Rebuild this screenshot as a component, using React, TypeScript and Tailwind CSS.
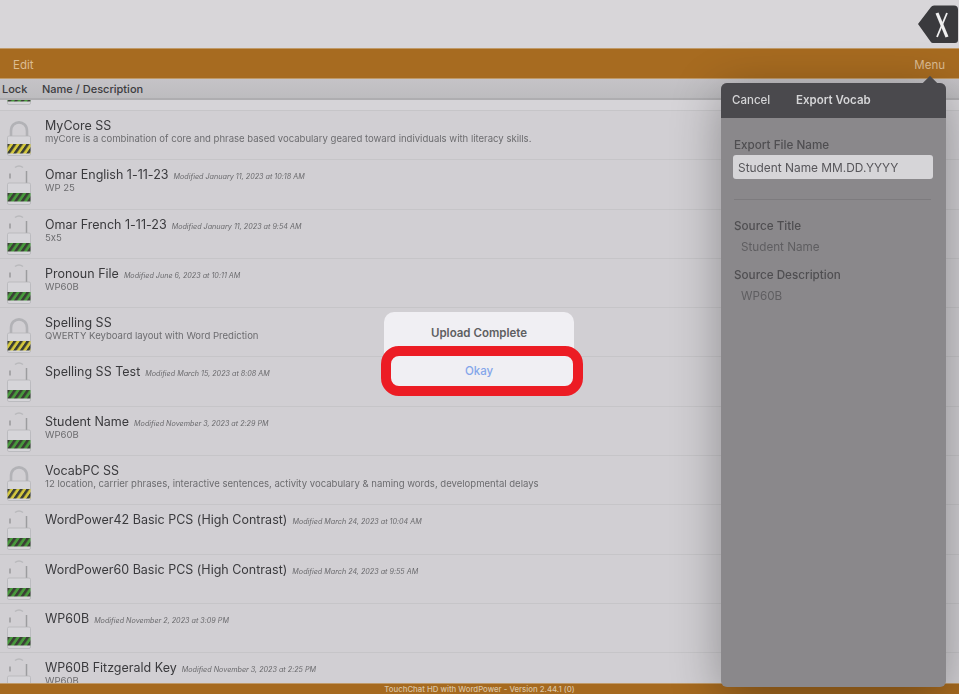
const font = "font-['Inter','Liberation_Sans',sans-serif] [font-feature-settings:'calt'_0]";

function Lock({ color }: { color: "y" | "g" }) {
  const open = color === "g";
  const stripe = open ? "#37932a" : "#d4c62c";
  const id = open ? "sg" : "sy";
  return (
    <svg width="24" height="40" viewBox="0 0 24 40" className="shrink-0">
      <defs>
        <pattern id={id} width="6.500" height="10" patternUnits="userSpaceOnUse" patternTransform="skewX(-35)">
          <rect width="6.500" height="10" fill={stripe} />
          <rect width="3.200" height="10" fill="#2a2e24" />
        </pattern>
      </defs>
      {open ? (
        <g fill="none" strokeWidth="1.500">
          <path d="M8 2.500 Q12 -0.500 16 2.500" stroke="#b9b9bc" />
          <path d="M3 8.500v5" stroke="#97979a" />
          <path d="M19.500 6v12" stroke="#9c9c9f" />
          <path d="M2.700 18.500v8" stroke="#b0b0b3" />
        </g>
      ) : (
        <path d="M4 20V15C4 3.500 20 3.500 20 15V20" fill="none" stroke="#b2b2b6" strokeWidth="2.600" />
      )}
      <rect x="0.500" y={open ? 18 : 20} width="23" height={open ? 21.500 : 19.500} rx="1.500" fill="#d6d5d9" stroke="#b2b2b5" strokeWidth="0.700" />
      <rect x="0.500" y="28" width="23" height={open ? 8.500 : 9.500} fill={`url(#${id})`} opacity="0.9" />
    </svg>
  );
}

type Row = { name: string; mod?: string; desc?: string; lock: "y" | "g" };

const rows: Row[] = [
  { name: "MyCore SS", desc: "myCore is a combination of core and phrase based vocabulary geared toward individuals with literacy skills.", lock: "y" },
  { name: "Omar English 1-11-23", mod: "Modified January 11, 2023 at 10:18 AM", desc: "WP 25", lock: "g" },
  { name: "Omar French 1-11-23", mod: "Modified January 11, 2023 at 9:54 AM", desc: "5x5", lock: "g" },
  { name: "Pronoun File", mod: "Modified June 6, 2023 at 10:11 AM", desc: "WP60B", lock: "g" },
  { name: "Spelling SS", desc: "QWERTY Keyboard layout with Word Prediction", lock: "y" },
  { name: "Spelling SS Test", mod: "Modified March 15, 2023 at 8:08 AM", lock: "g" },
  { name: "Student Name", mod: "Modified November 3, 2023 at 2:29 PM", desc: "WP60B", lock: "g" },
  { name: "VocabPC SS", desc: "12 location, carrier phrases, interactive sentences, activity vocabulary & naming words, developmental delays", lock: "y" },
  { name: "WordPower42 Basic PCS (High Contrast)", mod: "Modified March 24, 2023 at 10:04 AM", lock: "g" },
  { name: "WordPower60 Basic PCS (High Contrast)", mod: "Modified March 24, 2023 at 9:55 AM", lock: "g" },
  { name: "WP60B", mod: "Modified November 2, 2023 at 3:09 PM", lock: "g" },
  { name: "WP60B Fitzgerald Key", mod: "Modified November 3, 2023 at 2:25 PM", desc: "WP60B", lock: "g" },
];

export default function App() {
  return (
    <div className={`${font} relative h-[694px] w-[961px] overflow-hidden bg-[#d1cfd3]`}>
      <div className="relative h-full w-full overflow-hidden blur-[0.4px]">
        <div className="flex h-full w-[959px] flex-col">
          <div className="relative h-[48px] shrink-0 bg-[#d8d6d9]">
            <svg width="42" height="40" viewBox="0 0 42 40" className="absolute right-0 top-[4px]">
              <path d="M1 20 L14 3 Q15 1.500 17 1.500 H37 Q41 1.500 41 5.500 V36 Q41 39 38 39 H16 Q14.500 39 13.500 37.500 Z" fill="#3a3a3d" />
              <path d="M20 9 L30 33" stroke="#f0f0f0" strokeWidth="3.200" fill="none" />
              <path d="M30 9 L20 33" stroke="#f0f0f0" strokeWidth="1.800" fill="none" />
            </svg>
          </div>
          <div className="flex h-[31px] shrink-0 items-center justify-between border-y border-[#c09a68] bg-[#a76b20] pl-[13px] pr-[14px] pt-[4px] text-[11.500px] text-[#dcbc92]">
            <span>Edit</span>
            <span>Menu</span>
          </div>
          <div className="flex h-[21px] shrink-0 items-center border-b-2 border-[#aeadb0] bg-gradient-to-b from-[#c5c3c7] to-[#bdbcbf] pt-[1px] text-[11px] font-medium text-[#3c3c3f]">
            <span className="w-[42px] pl-[2px]">Lock</span>
            <span>Name / Description</span>
          </div>
          <div className="min-h-0 flex-1 overflow-hidden">
            <div className="flex h-[11px] items-start overflow-hidden border-b border-[#c6c5c8] bg-[#d6d4d8] pl-[7px]">
              <div className="h-[5px] overflow-hidden">
                <div className="mt-[-35px]"><Lock color="g" /></div>
              </div>
            </div>
            {rows.map((r) => (
              <div key={r.name} className="flex h-[49.300px] items-start border-b border-[#c6c5c8] pl-[7px]">
                <div className="mr-[14px] mt-[5px]"><Lock color={r.lock} /></div>
                <div className="pt-[7px]">
                  <div className="flex items-baseline gap-[5px] whitespace-nowrap">
                    <span className="text-[12.500px] leading-[16px] text-[#3a3a3d]">{r.name}</span>
                    {r.mod && <span className="text-[7.200px] italic text-[#6a6a6d]">{r.mod}</span>}
                  </div>
                  {r.desc && <div className="mt-[-1px] whitespace-nowrap text-[9.550px] leading-[12px] text-[#6c6c6f]">{r.desc}</div>}
                </div>
              </div>
            ))}
          </div>
          <div className="flex h-[11px] shrink-0 items-center justify-center border-t border-[#c09a68] bg-[#a66a1f] pt-[1px] text-[7.800px] font-medium text-[#d9c4a4]">
            TouchChat HD with WordPower - Version 2.44.1 (0)
          </div>
        </div>

        <div className="absolute left-[721px] top-[83px] flex h-[604px] w-[225px] flex-col overflow-hidden rounded-[6px] bg-[#8a888b] shadow-[0_10px_50px_rgba(0,0,0,0.32)]">
          <div className="flex h-[35px] shrink-0 items-center bg-[#4a494d] pl-[11px] text-[11.500px] font-medium text-[#d5d5d7]">
            <span className="w-[64px]">Cancel</span>
            <span className="font-semibold">Export Vocab</span>
          </div>
          <div className="flex flex-col px-[13px] pt-[20px] text-[11.700px] font-medium text-[#4f4e51]">
            <span className="leading-[14px]">Export File Name</span>
            <div className="ml-[-1px] mt-[3px] flex h-[24px] w-[200px] items-center rounded-[3px] bg-[#d6d5d8] pl-[5px] pt-[2px] text-[11.900px] font-normal text-[#57565a]">Student Name MM.DD.YYYY</div>
            <div className="mt-[20px] h-px w-[197px] bg-[#7d7b7e]" />
            <span className="mt-[19px] leading-[14px]">Source Title</span>
            <span className="mt-[7px] pl-[7px] font-normal leading-[14px] text-[#5f5e61]">Student Name</span>
            <span className="mt-[14px] leading-[14px]">Source Description</span>
            <span className="mt-[7px] pl-[7px] font-normal leading-[14px] text-[#5f5e61]">WP60B</span>
          </div>
        </div>
        <div className="absolute left-[924px] top-[78px] h-[12px] w-[12px] rotate-45 bg-[#4a494d]" style={{ clipPath: "polygon(0 0, 100% 0, 0 100%)" }} />

        <div className="absolute left-[384px] top-[312px] flex h-[76px] w-[190px] flex-col rounded-[10px] bg-[#f0eff3] text-[11.500px]">
          <div className="flex h-[44px] items-center justify-center font-semibold text-[#5e5e61]">Upload Complete</div>
          <div className="flex flex-1 items-center justify-center pb-[1px] font-medium text-[#84a6ea]">Okay</div>
        </div>
        <div className="absolute left-[381px] top-[346px] h-[50px] w-[202px] rounded-[18px] border-[10px] border-[#ec1c24]" />
      </div>

      <div className="absolute right-0 top-0 h-full w-[2px] bg-white" />
    </div>
  );
}
